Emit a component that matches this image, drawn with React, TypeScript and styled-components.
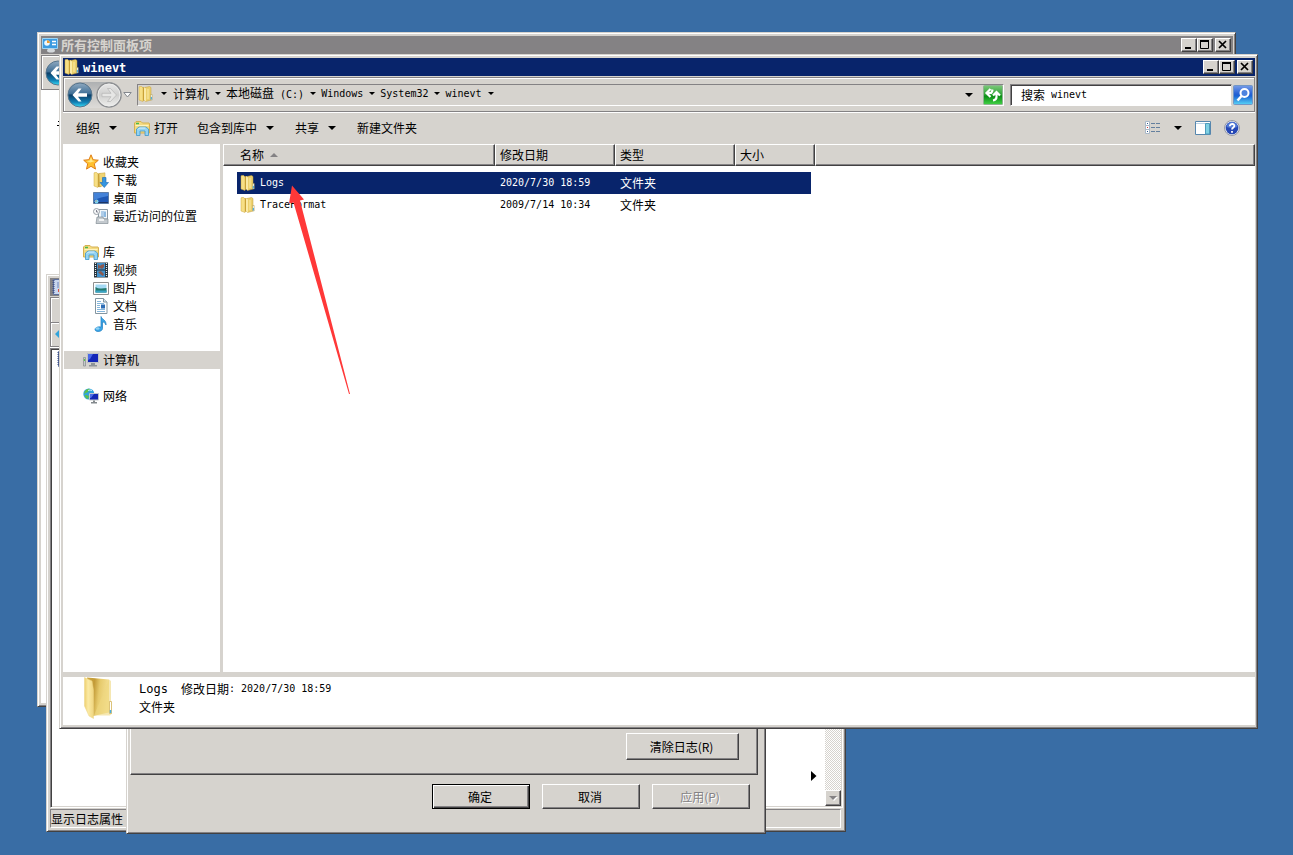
import React from 'react';
import styled, { createGlobalStyle, css } from 'styled-components';

const face = '#d6d3ce';
const shade = '#848284';
const dark = '#424142';
const navy = '#08246b';

const GlobalStyle = createGlobalStyle`
  * { box-sizing: border-box; }
  body {
    margin: 0;
    background: #396da5;
    color: #000;
    font: 12px/18px 'Noto Sans CJK SC', 'Liberation Sans', sans-serif;
  }
  button, input { font: inherit; color: inherit; margin: 0; }
  button { padding: 0; border: 0; background: none; }
`;

const Desktop = styled.main`
  position: relative;
  min-height: 100vh;
  overflow: hidden;
`;

const raised = css`
  border: 1px solid;
  border-color: #fff ${dark} ${dark} #fff;
  box-shadow: inset -1px -1px ${shade};
`;

const Mono = styled.span`
  font-family: 'DejaVu Sans Mono', 'Liberation Mono', monospace;
  font-size: 10px;
  white-space: pre;
`;

const Window = styled.section<{ $top: number; $left: number; $right: number; $bottom: number }>`
  position: absolute;
  top: ${p => p.$top}px;
  left: ${p => p.$left}px;
  right: ${p => p.$right}px;
  bottom: ${p => p.$bottom}px;
  display: flex;
  flex-direction: column;
  padding: 3px 2px 3px 3px;
  background: ${face};
  border: 1px solid;
  border-color: ${face} ${dark} ${dark} ${face};
  box-shadow: inset 1px 1px #fff, inset -1px -1px ${shade};
`;

const TitleBar = styled.header<{ $active?: boolean }>`
  flex: none;
  display: flex;
  align-items: center;
  gap: 3px;
  height: 18px;
  padding: 0 2px 0 1px;
  background: ${p => (p.$active ? navy : shade)};
  color: ${p => (p.$active ? '#fff' : face)};
`;

const Title = styled.h1`
  flex: 1;
  margin: 0;
  font-size: 13px;
  line-height: 18px;
  font-weight: 700;
`;

const TitleMono = styled(Mono)`
  font-size: 12px;
`;

const WindowButtons = styled.div`
  display: flex;
`;

const WindowButton = styled.button`
  ${raised}
  display: flex;
  width: 16px;
  height: 14px;
  background: ${face};
  &:last-child { margin-left: 2px; }
`;

const CaptionGlyph = styled.svg`
  width: 14px;
  height: 12px;
  stroke: #000;
  fill: none;
  stroke-width: 2;
`;

const Caption = () => (
  <WindowButtons>
    <WindowButton aria-label="最小化"><CaptionGlyph viewBox="0 0 14 12"><path d="M3 9h6" /></CaptionGlyph></WindowButton>
    <WindowButton aria-label="最大化"><CaptionGlyph viewBox="0 0 14 12"><path d="M2 2h9" /><path d="M2.500 2v7.500h8v-7.500" strokeWidth="1" /></CaptionGlyph></WindowButton>
    <WindowButton aria-label="关闭"><CaptionGlyph viewBox="0 0 14 12"><path d="M3 2l7 7M10 2l-7 7" strokeWidth="1.700" /></CaptionGlyph></WindowButton>
  </WindowButtons>
);

const NavBar = styled.nav`
  flex: none;
  display: flex;
  align-items: center;
  height: 35px;
  margin-top: 1px;
  padding: 0 1px 0 3px;
  border: 1px solid ${shade};
  box-shadow: inset 1px 1px #fff, 0 1px #fff;
`;

const TravelPill = styled.div`
  display: flex;
  align-items: center;
  gap: 3px;
  height: 26px;
  margin-right: 1px;
  border-radius: 13px;
  background: linear-gradient(#aeb0b2, #c9c8c6 50%, #dddbd8);
`;

const RoundButton = styled.button`
  display: flex;
`;

const DropTriangle = styled.i<{ $size?: number }>`
  display: block;
  width: 0;
  height: 0;
  border: ${p => p.$size ?? 3}px solid transparent;
  border-top-color: #000;
  border-bottom: 0;
`;

const AddressBar = styled.div`
  flex: 1;
  display: flex;
  align-items: center;
  height: 22px;
  margin-left: 5px;
  border: 1px solid;
  border-color: ${shade} #fff #fff ${shade};
`;

const Crumb = styled.button`
  display: flex;
  align-items: center;
  gap: 6px;
  height: 20px;
  padding: 0 5px 2px 0;
  line-height: 18px;
`;

const FolderCrumb = styled(Crumb)`
  gap: 7px;
  padding-right: 6px;
`;

const AddressEnd = styled.div`
  display: flex;
  align-items: center;
  gap: 10px;
  margin-left: auto;
`;

const IconButton = styled.button`
  display: flex;
  align-items: center;
`;

const SearchField = styled.label`
  flex: none;
  display: flex;
  align-items: center;
  width: 222px;
  height: 22px;
  margin: 0 1px 0 6px;
  padding-left: 10px;
  background: #fff;
  border: 1px solid;
  border-color: ${shade} ${face} #fff ${shade};
  box-shadow: inset 1px 1px ${dark};
`;

const SearchInput = styled.input`
  flex: 1;
  min-width: 0;
  padding: 0;
  border: 0;
  outline: 0;
  background: transparent;
  font: 10px/18px 'DejaVu Sans Mono', 'Liberation Mono', monospace;
`;

const SearchPrefix = styled.span`
  margin-right: 6px;
`;

const Toolbar = styled.div`
  flex: none;
  display: flex;
  align-items: center;
  height: 32px;
  padding: 0 15px 0 13px;
`;

const ToolButton = styled.button<{ $after: number }>`
  display: flex;
  align-items: center;
  gap: 9px;
  margin-right: ${p => p.$after}px;
  line-height: 18px;
`;

const OpenButton = styled(ToolButton)`
  gap: 4px;
`;

const ToolEnd = styled.div`
  display: flex;
  align-items: center;
  gap: 13px;
  margin-left: auto;
`;

const Body = styled.div`
  flex: 1;
  display: flex;
  min-height: 0;
`;

const Sidebar = styled.aside`
  flex: none;
  width: 157px;
  margin-right: 3px;
  padding-top: 9px;
  background: #fff;
`;

const TreeGroup = styled.ul`
  margin: 0 0 18px;
  padding: 0;
  list-style: none;
`;

const TreeItem = styled.li<{ $child?: boolean; $selected?: boolean }>`
  display: flex;
  align-items: center;
  gap: 4px;
  height: 18px;
  margin-left: 1px;
  padding-left: ${p => (p.$child ? 29 : 19)}px;
  background: ${p => (p.$selected ? face : 'transparent')};
`;

const FilePane = styled.div`
  flex: 1;
  min-width: 0;
  background: #fff;
`;

const FileTable = styled.table`
  display: block;
  border-spacing: 0;
`;

const FileHead = styled.thead`
  display: block;
`;

const HeadRow = styled.tr`
  display: grid;
  grid-template-columns: 272px 120px 120px 80px 1fr;
`;

const HeadCell = styled.th<{ $inset?: number }>`
  ${raised}
  display: flex;
  align-items: center;
  gap: 6px;
  height: 22px;
  padding: 0 0 0 ${p => p.$inset ?? 4}px;
  background: ${face};
  font-weight: 400;
`;

const SortMark = styled.i`
  border: 4px solid transparent;
  border-bottom-color: ${shade};
  border-top: 0;
`;

const FileBody = styled.tbody`
  display: block;
  padding: 6px 0 0 14px;
`;

const FileRow = styled.tr<{ $selected?: boolean }>`
  display: grid;
  grid-template-columns: 258px 120px 120px 76px;
  width: 574px;
  height: 22px;
  background: ${p => (p.$selected ? navy : 'transparent')};
  color: ${p => (p.$selected ? '#fff' : '#000')};
`;

const FileCell = styled.td`
  display: flex;
  align-items: center;
  gap: 4px;
  padding: 0 0 0 5px;
  &:first-child { padding-left: 3px; }
`;

const Details = styled.footer`
  flex: none;
  display: flex;
  gap: 26px;
  height: 48px;
  margin-top: 5px;
  padding-left: 21px;
  background: #fff;
`;

const DetailsText = styled.div`
  padding-top: 3px;
`;

const DetailsLine = styled.p`
  margin: 0;
  display: flex;
`;

const DetailsName = styled(Mono)`
  width: 42px;
  font-size: 12px;
`;

const MarkPane = styled.div`
  flex: 1;
  padding: 24px 0 0 16px;
  background: #fff;
`;

const MenuStrip = styled.div`
  flex: none;
  height: 50px;
  margin-top: 1px;
  border: 1px solid ${shade};
  box-shadow: inset 1px 1px #fff, 0 1px #fff;
`;

const MenuLine = styled.div`
  height: 25px;
  border-bottom: 1px solid ${shade};
  box-shadow: inset 1px 1px #fff, 0 1px #fff;
`;

const ToolLine = styled.div`
  display: flex;
  align-items: center;
  height: 22px;
  padding-left: 4px;
`;

const SunkenPane = styled.div`
  flex: 1;
  display: flex;
  justify-content: flex-end;
  margin-top: 1px;
  background: #fff;
  border: 1px solid;
  border-color: ${shade} #fff #fff ${shade};
  box-shadow: inset 1px 1px ${dark}, inset -1px -1px ${face};
  padding: 2px 1px 1px 5px;
`;

const TreePeek = styled.div`
  margin-right: auto;
`;

const Expander = styled.div`
  display: flex;
  align-items: flex-end;
  padding: 0 8px 25px 0;
`;

const ScrollTrack = styled.div`
  display: flex;
  align-items: flex-end;
  width: 16px;
  background: repeating-conic-gradient(#fff 0 25%, ${face} 0 50%) 0 0 / 2px 2px;
`;

const ScrollButton = styled.button`
  ${raised}
  display: flex;
  align-items: center;
  justify-content: center;
  width: 16px;
  height: 16px;
  background: ${face};
  ${DropTriangle} { border-top-color: ${shade}; filter: drop-shadow(1px 1px #fff); }
`;

const StatusBar = styled.footer`
  flex: none;
  height: 19px;
  margin: 1px 2px 0 0;
  border: 1px solid;
  border-color: ${shade} #fff #fff ${shade};
  line-height: 18px;
`;

const Dialog = styled(Window)`
  right: auto;
  width: 640px;
`;

const TabPanel = styled.div`
  ${raised}
  flex: 1;
  display: flex;
  align-items: flex-end;
  justify-content: flex-end;
  margin-right: 5px;
  padding: 0 18px 14px 0;
`;

const DialogFooter = styled.div`
  display: flex;
  justify-content: flex-end;
  gap: 12px;
  padding: 9px 13px 21px 0;
`;

const PushButton = styled.button<{ $wide?: boolean; $primary?: boolean }>`
  ${raised}
  width: ${p => (p.$wide ? 113 : 98)}px;
  height: ${p => (p.$wide ? 27 : 25)}px;
  padding-right: 2px;
  line-height: 18px;
  ${p => p.$primary && css`
    border-color: #000;
    box-shadow: inset 1px 1px #fff, inset -1px -1px ${dark}, inset -2px -2px ${shade};
  `}
  &:disabled { color: ${shade}; text-shadow: 1px 1px #fff; }
`;

const ArrowOverlay = styled.svg`
  position: absolute;
  left: 288px;
  top: 185px;
  width: 62px;
  height: 210px;
  pointer-events: none;
`;

const Svg = ({ size = 16, children }: { size?: number; children: React.ReactNode }) => (
  <svg width={size} height={size} viewBox={`0 0 ${size} ${size}`} aria-hidden="true">{children}</svg>
);

const FolderIcon = () => (
  <Svg>
    <path d="M4 1.500 7 1v13.500l-3 .5z" fill="#c79f35" />
    <path d="M1 .8 3.500.3 5 2v13.500L1 14z" fill="#f7df85" stroke="#cfa941" strokeWidth=".5" />
    <path d="M7 1.500 11.500.500 13 1.500v12.500L7.500 15.500z" fill="#ecd06c" stroke="#c39d3a" strokeWidth=".5" />
    <path d="M6 1l2 1.500v13L6 14z" fill="#fbeaa6" />
    <path d="M10 3v10" stroke="#f6e294" strokeWidth="1.500" />
    <path d="M12.500 8.500h1.700v5.500h-1.700z" fill="#eef8fb" stroke="#b3973f" strokeWidth=".5" />
    <path d="M13.300 11v2.500" stroke="#2f9fdc" />
  </Svg>
);

const ExplorerIcon = () => (
  <Svg>
    <path d="M.5 13V3l1.500-1.500h5L8.500 3H15l.5 1v9z" fill="#f4da80" stroke="#d5b050" />
    <path d="M1.500 5.500h13" stroke="#fff3bd" />
    <path d="M2 3.500h3" stroke="#48b94b" strokeWidth="1.500" />
    <path d="M2.500 15.500V9L5 7h7l2.500 2v6.500h-3.500V11H6v4.500z" fill="#93d3f2" stroke="#3f97ca" strokeWidth=".8" />
    <path d="M4 9.500 5.500 8h6" stroke="#dff4fc" fill="none" />
  </Svg>
);

const StarIcon = () => (
  <Svg><path d="m8 .8 2.100 4.900 5.200.5-4 3.600 1.200 5.300L8 12.300l-4.500 2.800 1.200-5.300-4-3.600 5.200-.5z" fill="#ffc02e" stroke="#e07f18" /><path d="m8 3 1.300 3.600 3 .4-5 1.500-4-1.500 3.500-.4z" fill="#ffe889" /></Svg>
);

const DownloadIcon = () => (
  <Svg>
    <path d="M4 1.500h4V15H4z" fill="#c79f35" />
    <path d="M1 .8 3.500.3 5 2v13.500L1 14z" fill="#f7df85" stroke="#cfa941" strokeWidth=".5" />
    <path d="M6 1.500 12 .8V13l-5.500 2z" fill="#efd473" stroke="#c9a340" strokeWidth=".5" />
    <path d="M9.500 5.500h3.500v5h2.500L11.300 15.500 7 10.500h2.500z" fill="#3595e0" stroke="#1c69b4" strokeWidth=".6" />
  </Svg>
);

const DesktopIcon = () => (
  <Svg>
    <path d="M.5 2.500h15v11H.5z" fill="#1f58b4" stroke="#5d7da8" />
    <path d="M1 3h14v3Q8 7 1 10z" fill="#4482d8" />
    <path d="M1 12.500h14" stroke="#1c3566" />
    <circle cx="3.500" cy="11.500" r="2" fill="#7bd3ef" /><path d="M2.500 10.500h1v1h-1z" fill="#e8642d" />
  </Svg>
);

const RecentIcon = () => (
  <Svg>
    <path d="M5.500 1.500h9V11h-9z" fill="#f3f7fa" stroke="#8c99a4" />
    <path d="M8 4h3M8 6h3M8 8h3" stroke="#6aa3d8" /><path d="M11 3.500h2V9h-2z" fill="#8db9e0" />
    <path d="M4 9h6l1 2h4v4.500H3z" fill="#c3c9ce" stroke="#858f96" strokeWidth=".7" />
    <path d="M6 12h5" stroke="#fff" strokeWidth="1.500" />
    <circle cx="3.500" cy="3.500" r="3" fill="#f5f7f8" stroke="#9aa1a8" /><path d="M3.500 2v2H5" stroke="#667" fill="none" strokeWidth=".8" />
  </Svg>
);

const VideoIcon = () => (
  <Svg>
    <path d="M1 .5h14v15H1z" fill="#26323b" /><path d="M4 1h8v6.500H4zM4 8.500h8V15H4z" fill="#3f91cd" />
    <path d="m5 2 2 2 1-1 3-1v3l-2 2-2-1-2 1zM5 10l3-1 3 3-1 2-3-2z" fill="#8c594e" />
    <path d="M2.500 1v14M13.500 1v14" stroke="#e9eef0" strokeWidth="1.200" strokeDasharray="1 1" />
  </Svg>
);

const PictureIcon = () => (
  <Svg>
    <path d="M.5 2.500h15v12H.5z" fill="#fff" stroke="#8f8f8f" />
    <path d="M2.500 4.500h11v8h-11z" fill="#a4d9f4" /><path d="M2.500 7q3 2 6 1.500T13.500 8v4.500h-11z" fill="#23796d" /><path d="M2.500 10.500h11v2h-11z" fill="#3ba5c7" />
  </Svg>
);

const DocumentIcon = () => (
  <Svg>
    <path d="M2.500.5h8l3.500 3.500v11.500H2.500z" fill="#fff" stroke="#8495a0" />
    <path d="M10.500.5V4H14" fill="#d8e4ec" stroke="#8495a0" /><path d="M4 3.500h4M4 5.500h7M4 7.500h3M4 9.500h3M4 11.500h8M4 13.500h8" stroke="#85b6db" /><path d="M8 6.500h4v4H8z" fill="#2c6db6" />
  </Svg>
);

const MusicIcon = () => (
  <Svg><path d="M8 .5c1 3 5.500 3.500 5 8.500-.8-2-2-3-3.500-3v6.500c0 1.500-1.500 3-4.500 3-3.500 0-3.800-3-1.500-4 1.500-.8 3-.8 4.500-.3z" fill="#3aa5e6" stroke="#1c7cc0" strokeWidth=".7" /><ellipse cx="4.500" cy="12.500" rx="2" ry="1.200" fill="#8fd3f6" /></Svg>
);

const ComputerIcon = () => (
  <Svg>
    <path d="M4.500 1.500h11v9h-11z" fill="#1426b8" stroke="#bfc3c6" />
    <path d="M5 2h5L7 7 5 8z" fill="#4a68e8" /><path d="M8 11h4v2h2v1.500H6V13h2z" fill="#8f9498" />
    <path d="M.5 5.500h2V14h-2z" fill="#c5c9cb" stroke="#858a8d" strokeWidth=".7" /><path d="M1 7h1v2H1z" fill="#55c945" />
  </Svg>
);

const NetworkIcon = () => (
  <Svg>
    <circle cx="5.800" cy="6" r="5.500" fill="#31a3dc" /><path d="M2 3q3-3 5-2L5 4 3 5 1 6zM3 7l3 1-1 3q-3-1-3.500-4z" fill="#5cc04d" /><path d="M5 2.500q2-1 4 0" stroke="#c4effa" fill="none" />
    <path d="M6.500 5.500h9v6.500h-9z" fill="#1428b4" stroke="#c3c8ca" /><path d="M7 6h4l-3 4H7z" fill="#4f70e6" /><path d="M10 12.500h2V14h2v1.500H8V14h2z" fill="#83898d" />
  </Svg>
);

const ControlPanelIcon = () => (
  <Svg>
    <path d="M.5 1.500h15v10H.5z" fill="#3c9be0" stroke="#9cd4f5" /><circle cx="5" cy="6" r="2.800" fill="#eef7fb" /><path d="M5 6V3.200A2.800 2.800 0 0 1 7.800 6z" fill="#ef9b2c" />
    <path d="M10 4.500h4M10 7.500h4" stroke="#fff" strokeWidth="1.300" /><ellipse cx="9" cy="13.500" rx="4" ry="2" fill="#d4d8db" />
  </Svg>
);

const BookIcon = () => (
  <Svg><path d="M2.500.5h13v15h-13z" fill="#c9d6ee" stroke="#5e719f" /><path d="M6 4h8M6 6h8M6 8h8" stroke="#6c83bb" /><path d="M7 10h3v3H7z" fill="#d84c43" /><path d="M2.500 1v14" stroke="#43548a" strokeWidth="2" strokeDasharray="1 1" /></Svg>
);

const BackIcon = () => (
  <svg width="26" height="26" viewBox="0 0 26 26" aria-hidden="true">
    <defs>
      <linearGradient id="backFill" x2="0" y2="1"><stop stopColor="#8fa9c0" /><stop offset=".45" stopColor="#3f6f96" /><stop offset=".5" stopColor="#0c3f68" /><stop offset=".8" stopColor="#127fb4" /><stop offset="1" stopColor="#37dcf6" /></linearGradient>
    </defs>
    <circle cx="13" cy="13" r="12" fill="url(#backFill)" stroke="#57758c" />
    <path d="M5.500 13 11.500 6.500h3L11 11.300h9v3.400h-9l3.500 4.800h-3z" fill="#fff" />
  </svg>
);

const ForwardIcon = () => (
  <svg width="26" height="26" viewBox="0 0 26 26" aria-hidden="true">
    <defs><linearGradient id="fwdFill" x2="0" y2="1"><stop stopColor="#e8e8e8" /><stop offset=".5" stopColor="#cfcfce" /><stop offset="1" stopColor="#f0f0ee" /></linearGradient></defs>
    <circle cx="13" cy="13" r="12" fill="url(#fwdFill)" stroke="#8d8f92" strokeWidth="1.500" /><circle cx="13" cy="13" r="11" fill="none" stroke="#ededec" />
    <path d="M20.500 13 14.500 6.500h-3L15 11.300H6v3.400h9l-3.500 4.800h3z" fill="#e6e6e5" stroke="#b5b5b5" strokeWidth=".7" />
  </svg>
);

const HistoryIcon = () => (
  <svg width="9" height="6" viewBox="0 0 9 6" aria-hidden="true"><path d="M.8.500h7.400L4.500 5z" fill="#fafafa" stroke="#84888e" /></svg>
);

const RefreshIcon = () => (
  <svg width="20" height="20" viewBox="0 0 20 20" aria-hidden="true">
    <defs><linearGradient id="refreshFill" x2="0" y2="1"><stop stopColor="#7cc87a" /><stop offset=".5" stopColor="#2ba333" /><stop offset=".55" stopColor="#098b13" /><stop offset="1" stopColor="#42d246" /></linearGradient></defs>
    <rect x=".5" y=".5" width="19" height="19" rx="1" fill="url(#refreshFill)" stroke="#8fb391" />
    <path d="M7.500 4 3.500 8l4 4M4 8h3.500Q9 8 9.500 4.500M10 10.500l3.500-3.500L17 10.500M13.500 8v4q0 3-3.500 3.500" fill="none" stroke="#fff" strokeWidth="2.200" />
  </svg>
);

const SearchIcon = () => (
  <svg width="20" height="20" viewBox="0 0 20 20" aria-hidden="true">
    <defs><linearGradient id="searchFill" x2="0" y2="1"><stop stopColor="#769be8" /><stop offset=".45" stopColor="#2560d4" /><stop offset=".55" stopColor="#1b63d3" /><stop offset="1" stopColor="#58d4f7" /></linearGradient></defs>
    <rect x=".5" y=".5" width="19" height="19" rx="1" fill="url(#searchFill)" stroke="#7296c5" />
    <circle cx="11.500" cy="8" r="4" fill="#4d83df" stroke="#fff" strokeWidth="2" /><path d="m8.500 11-4 4.500" stroke="#fff" strokeWidth="2.500" />
  </svg>
);

const ViewIcon = () => (
  <Svg><path d="M.5 1.500h4v4h-4zM.5 5.500h4v4h-4zM.5 9.500h4v4h-4z" fill="#fff" stroke="#a9b8c8" /><path d="M2 3.500h1M2 11.500h1" stroke="#345a8c" /><path d="M2 7.500h1" stroke="#d42b2b" /><path d="M6 3.500h4M11 3.500h4M6 7.500h4M11 7.500h4M6 11.500h4M11 11.500h4" stroke="#65809e" /></Svg>
);

const PaneIcon = () => (
  <Svg><path d="M.5 1.500h15v13H.5z" fill="#fff" stroke="#5686ad" /><path d="M1 3.500h14" stroke="#b7d1e5" /><path d="M10.500 3.500h4v10.500h-4z" fill="#7fd0e3" stroke="#4c9cbc" /></Svg>
);

const HelpIcon = () => (
  <Svg><circle cx="8" cy="8" r="7.500" fill="#e5e7ed" stroke="#9699a4" /><circle cx="8" cy="8" r="6.300" fill="#2547b5" /><path d="M2.500 7a5.500 5 0 0 1 11 0Q8 9 2.500 7z" fill="#5179d6" /><path d="M5.800 6.200C6 3 11 3.500 10.300 6.300 10 7.500 8 7.700 8 9.500M8 11v1.800" fill="none" stroke="#fff" strokeWidth="1.800" /></Svg>
);

const OpenFolderIcon = () => (
  <svg width="29" height="42" viewBox="0 0 29 42" aria-hidden="true">
    <defs>
      <linearGradient id="flap" x2="1"><stop stopColor="#eecf6e" /><stop offset=".4" stopColor="#fbeaa4" /><stop offset="1" stopColor="#f0d680" /></linearGradient>
      <linearGradient id="rear" x2="1" y2=".2"><stop stopColor="#cfa73f" /><stop offset=".35" stopColor="#c39b38" /><stop offset=".6" stopColor="#e6ca6c" /><stop offset="1" stopColor="#f5e093" /></linearGradient>
    </defs>
    <path d="M3 .500 25 2.500v33L9 39z" fill="url(#rear)" />
    <path d="M25 2.500 27 4v21h1v11.500l-2 2L10 38.500z" fill="#efd77f" opacity=".6" />
    <path d="M.5.500 8 4l1.500 9V41.500L5 39 .5 29z" fill="url(#flap)" stroke="#ecd486" strokeWidth=".5" />
    <path d="M25.500 24.500h2v12h-2z" fill="#fff" stroke="#cfae50" strokeWidth=".7" /><path d="M26.500 33v3" stroke="#4aaee2" strokeWidth="1.500" />
  </svg>
);

const EventViewer = () => (
  <Window $top={274} $left={46} $right={447} $bottom={23}>
    <TitleBar><BookIcon /></TitleBar>
    <MenuStrip>
      <MenuLine />
      <ToolLine>
        <svg width="12" height="12" viewBox="0 0 12 12" aria-hidden="true"><path d="M0 6l6-6v3.500h6v5H6V12z" fill="#2fa3dc" /></svg>
      </ToolLine>
    </MenuStrip>
    <SunkenPane>
      <TreePeek><BookIcon /></TreePeek>
      <Expander><svg width="6" height="10" viewBox="0 0 6 10" aria-hidden="true"><path d="M0 0l5.500 5L0 10z" /></svg></Expander>
      <ScrollTrack><ScrollButton aria-label="向下滚动"><DropTriangle $size={4} /></ScrollButton></ScrollTrack>
    </SunkenPane>
    <StatusBar>显示日志属性</StatusBar>
  </Window>
);

const LogProperties = () => (
  <Dialog $top={380} $left={126} $right={0} $bottom={21}>
    <TabPanel><PushButton $wide>清除日志(R)</PushButton></TabPanel>
    <DialogFooter>
      <PushButton $primary>确定</PushButton>
      <PushButton>取消</PushButton>
      <PushButton disabled>应用(P)</PushButton>
    </DialogFooter>
  </Dialog>
);

const Explorer = () => (
  <Window $top={54} $left={59} $right={35} $bottom={126}>
    <TitleBar $active>
      <FolderIcon />
      <Title><TitleMono>winevt</TitleMono></Title>
      <Caption />
    </TitleBar>
    <NavBar>
      <TravelPill>
        <RoundButton aria-label="后退"><BackIcon /></RoundButton>
        <RoundButton aria-label="前进"><ForwardIcon /></RoundButton>
      </TravelPill>
      <IconButton aria-label="历史记录"><HistoryIcon /></IconButton>
      <AddressBar>
        <FolderCrumb aria-label="位置"><FolderIcon /><DropTriangle /></FolderCrumb>
        <Crumb>计算机<DropTriangle /></Crumb>
        <Crumb><span>本地磁盘<Mono> (C:)</Mono></span><DropTriangle /></Crumb>
        <Crumb><Mono>Windows</Mono><DropTriangle /></Crumb>
        <Crumb><Mono>System32</Mono><DropTriangle /></Crumb>
        <Crumb><Mono>winevt</Mono><DropTriangle /></Crumb>
        <AddressEnd>
          <IconButton aria-label="以前的位置"><DropTriangle $size={4} /></IconButton>
          <IconButton aria-label="刷新"><RefreshIcon /></IconButton>
        </AddressEnd>
      </AddressBar>
      <SearchField>
        <SearchPrefix>搜索</SearchPrefix>
        <SearchInput type="text" defaultValue="winevt" />
      </SearchField>
      <IconButton aria-label="搜索"><SearchIcon /></IconButton>
    </NavBar>
    <Toolbar>
      <ToolButton $after={17}>组织<DropTriangle $size={4} /></ToolButton>
      <OpenButton $after={19}><ExplorerIcon />打开</OpenButton>
      <ToolButton $after={21}>包含到库中<DropTriangle $size={4} /></ToolButton>
      <ToolButton $after={21}>共享<DropTriangle $size={4} /></ToolButton>
      <ToolButton $after={0}>新建文件夹</ToolButton>
      <ToolEnd>
        <IconButton aria-label="更改视图"><ViewIcon /></IconButton>
        <IconButton aria-label="更多选项"><DropTriangle $size={4} /></IconButton>
        <IconButton aria-label="预览窗格"><PaneIcon /></IconButton>
        <IconButton aria-label="帮助"><HelpIcon /></IconButton>
      </ToolEnd>
    </Toolbar>
    <Body>
      <Sidebar>
        <TreeGroup>
          <TreeItem><StarIcon />收藏夹</TreeItem>
          <TreeItem $child><DownloadIcon />下载</TreeItem>
          <TreeItem $child><DesktopIcon />桌面</TreeItem>
          <TreeItem $child><RecentIcon />最近访问的位置</TreeItem>
        </TreeGroup>
        <TreeGroup>
          <TreeItem><ExplorerIcon />库</TreeItem>
          <TreeItem $child><VideoIcon />视频</TreeItem>
          <TreeItem $child><PictureIcon />图片</TreeItem>
          <TreeItem $child><DocumentIcon />文档</TreeItem>
          <TreeItem $child><MusicIcon />音乐</TreeItem>
        </TreeGroup>
        <TreeGroup>
          <TreeItem $selected><ComputerIcon />计算机</TreeItem>
        </TreeGroup>
        <TreeGroup>
          <TreeItem><NetworkIcon />网络</TreeItem>
        </TreeGroup>
      </Sidebar>
      <FilePane>
        <FileTable>
          <FileHead>
            <HeadRow>
              <HeadCell $inset={16}>名称<SortMark /></HeadCell>
              <HeadCell>修改日期</HeadCell>
              <HeadCell>类型</HeadCell>
              <HeadCell>大小</HeadCell>
              <HeadCell />
            </HeadRow>
          </FileHead>
          <FileBody>
            <FileRow $selected>
              <FileCell><FolderIcon /><Mono>Logs</Mono></FileCell>
              <FileCell><Mono>2020/7/30 18:59</Mono></FileCell>
              <FileCell>文件夹</FileCell>
            </FileRow>
            <FileRow>
              <FileCell><FolderIcon /><Mono>TraceFormat</Mono></FileCell>
              <FileCell><Mono>2009/7/14 10:34</Mono></FileCell>
              <FileCell>文件夹</FileCell>
            </FileRow>
          </FileBody>
        </FileTable>
      </FilePane>
    </Body>
    <Details>
      <OpenFolderIcon />
      <DetailsText>
        <DetailsLine><DetailsName>Logs</DetailsName>修改日期<Mono>: 2020/7/30 18:59</Mono></DetailsLine>
        <DetailsLine>文件夹</DetailsLine>
      </DetailsText>
    </Details>
  </Window>
);

export default function App() {
  return (
    <>
      <GlobalStyle />
      <Desktop>
        <Window $top={32} $left={37} $right={57} $bottom={148}>
          <TitleBar>
            <ControlPanelIcon />
            <Title>所有控制面板项</Title>
            <Caption />
          </TitleBar>
          <NavBar><BackIcon /></NavBar>
          <MarkPane>
            <svg width="4" height="8" viewBox="0 0 4 8" aria-hidden="true"><path d="M1 1.500h3M0 5.500h3" stroke="#000" /></svg>
          </MarkPane>
        </Window>
        <EventViewer />
        <LogProperties />
        <Explorer />
        <ArrowOverlay viewBox="0 0 62 210" aria-hidden="true">
          <path d="M4 .5 16 14.500 12 15.500 62 209 61 209 5.500 17.500 1 18.500z" fill="#ff3838" />
        </ArrowOverlay>
      </Desktop>
    </>
  );
}
